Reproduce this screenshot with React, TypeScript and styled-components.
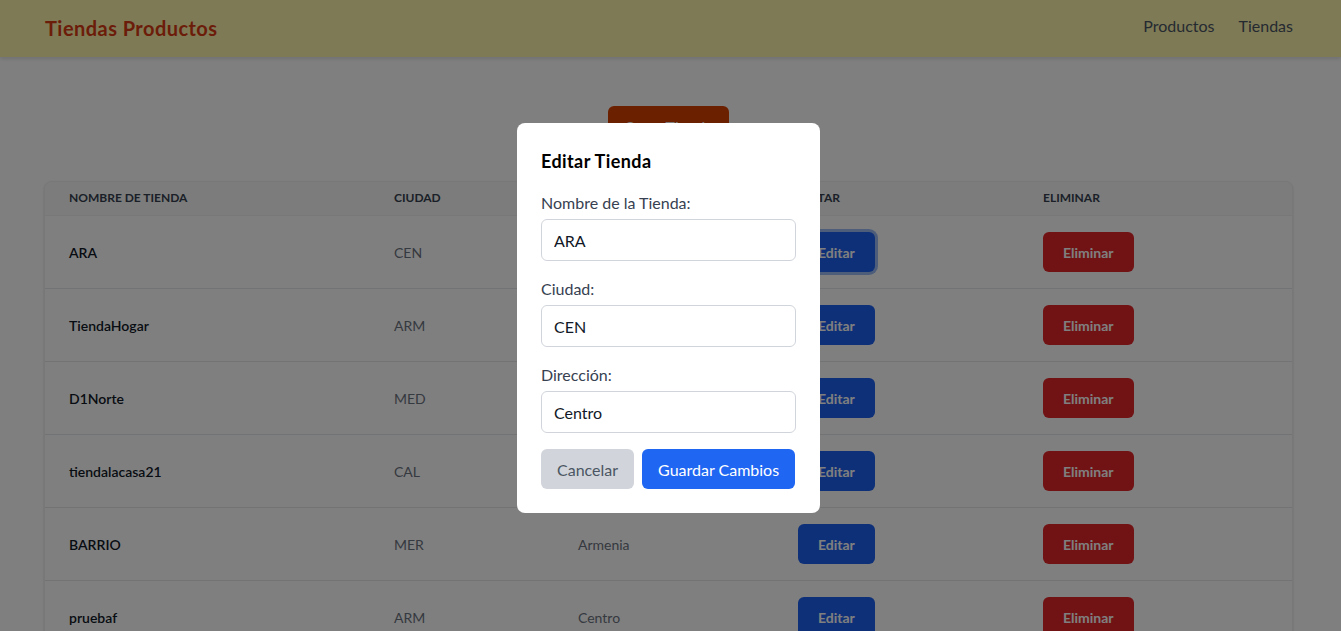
import React from "react";
import styled, { createGlobalStyle } from "styled-components";

const FONT = `"Lato", "Liberation Sans", sans-serif`;

const GlobalStyle = createGlobalStyle`
  html, body { margin: 0; padding: 0; overflow: hidden; }
  body { font-family: ${FONT}; background: #ffffff; color: #111827; }
  * { box-sizing: border-box; }
`;

const Header = styled.header`
  height: 57px;
  background: #fcf4ac;
  box-shadow: 0 2px 4px rgba(0, 0, 0, 0.12);
  display: flex;
  align-items: center;
  justify-content: space-between;
  padding: 0 48px 0 45px;
  position: relative;
  z-index: 1;
`;

const Brand = styled.h1`
  margin: -2px 0 0;
  font-size: 20px;
  font-weight: 700;
  color: #d93b12;
  line-height: 28px;
  letter-spacing: 0.45px;
`;

const Nav = styled.nav`
  display: flex;
  gap: 24px;
  margin-top: -5px;
`;

const NavLink = styled.a`
  font-size: 16px;
  color: #4b5563;
  text-decoration: none;
  line-height: 24px;
`;

const Main = styled.main`
  padding: 49px 48px 0 44px;
  display: flex;
  flex-direction: column;
  align-items: center;
`;

const CreateButton = styled.button`
  height: 40px;
  padding: 0 16px;
  border: none;
  border-radius: 6px;
  background: #d64000;
  color: #ffffff;
  font-family: ${FONT};
  font-size: 16px;
`;

const Table = styled.div`
  width: 100%;
  margin-top: 35px;
  background: #ffffff;
  border: 1px solid #f0f1f3;
  border-radius: 8px;
  box-shadow: 0 1px 3px rgba(0, 0, 0, 0.1), 0 1px 2px rgba(0, 0, 0, 0.06);
  overflow: hidden;
`;

const Row = styled.div<{ $head?: boolean }>`
  display: grid;
  grid-template-columns: 325px 184px 220px 245px 1fr;
  align-items: center;
  background: ${(p) => (p.$head ? "#f7f9f7" : "#ffffff")};
  border-bottom: 1px solid ${(p) => (p.$head ? "#eef0ee" : "#e5e7eb")};
  height: ${(p) => (p.$head ? "34px" : "73px")};
`;

const HeadCell = styled.div`
  padding: 0 24px 2px;
  font-size: 12px;
  font-weight: 700;
  text-transform: uppercase;
  color: #374151;
`;

const Cell = styled.div<{ $strong?: boolean }>`
  padding: 0 24px;
  font-size: 14px;
  font-weight: ${(p) => (p.$strong ? 600 : 400)};
  color: ${(p) => (p.$strong ? "#111827" : "#6b7280")};
`;

const ActionButton = styled.button<{ $variant: "edit" | "delete"; $focus?: boolean }>`
  height: 40px;
  padding: 0 20px;
  border: none;
  border-radius: 6px;
  background: ${(p) => (p.$variant === "edit" ? "#1d60f0" : "#e32428")};
  color: #ffffff;
  font-family: ${FONT};
  font-size: 14px;
  font-weight: 700;
  box-shadow: ${(p) => (p.$focus ? "0 0 0 3px #9dbcf5" : "none")};
`;

const Overlay = styled.div`
  position: fixed;
  inset: 0;
  background: rgba(0, 0, 0, 0.5);
  display: flex;
  align-items: center;
  justify-content: center;
  padding: 5px 4px 0 0;
  z-index: 10;
`;

const Modal = styled.div`
  width: 303px;
  background: #ffffff;
  border-radius: 8px;
  padding: 24px;
`;

const ModalTitle = styled.h2`
  margin: 0 0 16px;
  font-size: 18px;
  line-height: 28px;
  font-weight: 700;
  color: #000000;
  letter-spacing: 0.4px;
`;

const Field = styled.div`
  display: flex;
  flex-direction: column;
  gap: 4px;
  margin-bottom: 16px;
`;

const Label = styled.label`
  font-size: 16px;
  line-height: 24px;
  color: #374151;
`;

const Input = styled.input`
  width: 100%;
  height: 42px;
  padding: 0 12px;
  border: 1px solid #d1d5db;
  border-radius: 6px;
  font-family: ${FONT};
  font-size: 16px;
  color: #111827;
  outline: none;
`;

const Actions = styled.div`
  display: flex;
  gap: 8px;
`;

const ModalButton = styled.button<{ $primary?: boolean }>`
  height: 40px;
  padding: 0 16px;
  border: none;
  border-radius: 6px;
  font-family: ${FONT};
  font-size: 16px;
  background: ${(p) => (p.$primary ? "#1f66f2" : "#d1d5db")};
  color: ${(p) => (p.$primary ? "#ffffff" : "#4b5563")};
`;

const stores = [
  { name: "ARA", city: "CEN", address: "Centro" },
  { name: "TiendaHogar", city: "ARM", address: "Armenia" },
  { name: "D1Norte", city: "MED", address: "Norte" },
  { name: "tiendalacasa21", city: "CAL", address: "Centro" },
  { name: "BARRIO", city: "MER", address: "Armenia" },
  { name: "pruebaf", city: "ARM", address: "Centro" },
  { name: "Tienda7", city: "BOG", address: "Sur" },
];

export default function App() {
  return (
    <>
      <GlobalStyle />
      <Header>
        <Brand>Tiendas Productos</Brand>
        <Nav>
          <NavLink href="#">Productos</NavLink>
          <NavLink href="#">Tiendas</NavLink>
        </Nav>
      </Header>
      <Main>
        <CreateButton>Crear Tienda</CreateButton>
        <Table>
          <Row $head>
            <HeadCell>Nombre de Tienda</HeadCell>
            <HeadCell>Ciudad</HeadCell>
            <HeadCell>Dirección</HeadCell>
            <HeadCell>Editar</HeadCell>
            <HeadCell>Eliminar</HeadCell>
          </Row>
          {stores.map((s, i) => (
            <Row key={s.name}>
              <Cell $strong>{s.name}</Cell>
              <Cell>{s.city}</Cell>
              <Cell>{s.address}</Cell>
              <Cell>
                <ActionButton $variant="edit" $focus={i === 0}>Editar</ActionButton>
              </Cell>
              <Cell>
                <ActionButton $variant="delete">Eliminar</ActionButton>
              </Cell>
            </Row>
          ))}
        </Table>
      </Main>
      <Overlay>
        <Modal>
          <ModalTitle>Editar Tienda</ModalTitle>
          <Field>
            <Label>Nombre de la Tienda:</Label>
            <Input defaultValue="ARA" />
          </Field>
          <Field>
            <Label>Ciudad:</Label>
            <Input defaultValue="CEN" />
          </Field>
          <Field>
            <Label>Dirección:</Label>
            <Input defaultValue="Centro" />
          </Field>
          <Actions>
            <ModalButton>Cancelar</ModalButton>
            <ModalButton $primary>Guardar Cambios</ModalButton>
          </Actions>
        </Modal>
      </Overlay>
    </>
  );
}
